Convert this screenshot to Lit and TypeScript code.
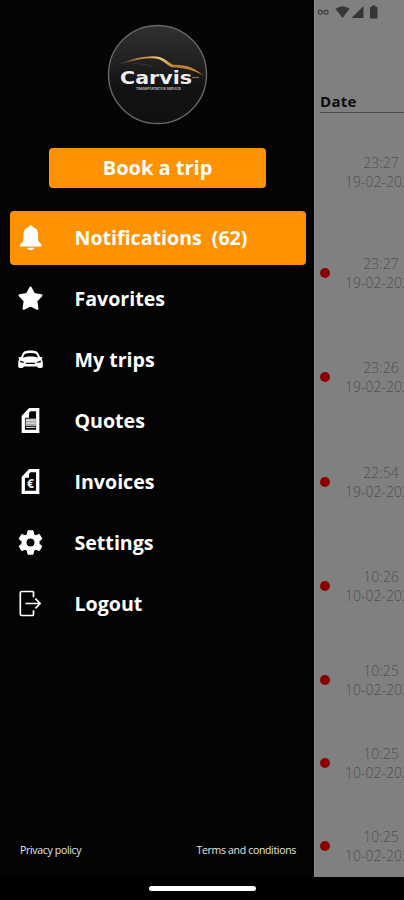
import { LitElement, html, svg, css } from "lit";
import { customElement } from "lit/decorators.js";
import { styleMap } from "lit/directives/style-map.js";

const icons: Record<string, unknown> = {
  bell: svg`<path fill="#fff" d="M12.8 0c1.2 0 1.9.8 1.9 1.9 3.600.9 5.400 3.500 5.400 7.400v5.200c0 1.700 1 3 3.200 4.600v2.400H2.100v-2.400c2.200-1.600 3.400-2.900 3.400-4.600V9.300c0-3.900 1.800-6.500 5.400-7.400C10.900.8 11.600 0 12.800 0zM8.800 22.700h8c-.7 1.500-2.200 2.300-4 2.300s-3.300-.8-4-2.300z"/>`,
  star: svg`<path fill="#fff" stroke="#fff" stroke-width="2.400" stroke-linejoin="round" d="M12.500 1.700l3.500 6.500 7.300 1.200-5.200 5.400 1.200 7.800-6.800-3.400-6.800 3.400 1.200-7.800L1.700 9.400 9 8.200z"/>`,
  car: svg`<path fill="#fff" d="M12.500 3.500C7.500 3.500 5.200 4.600 4.300 7L3 9.900l-2 .3-.8.900 1.200.9C.5 13.200.2 14.500.2 16.300v3c0 1.300.5 1.700 1.700 1.700h2.200c1 0 1.500-.5 1.700-1.400h13.400c.2.900.7 1.400 1.700 1.400h2.200c1.200 0 1.700-.4 1.700-1.700v-3c0-1.800-.3-3.100-1.200-4.300l1.200-.9-.8-.9-2-.3L20.700 7C19.800 4.600 17.500 3.500 12.500 3.500z"/><path d="M5 10.700l1-2.600c.5-1.300 2.500-2 6.500-2s6 .7 6.500 2l1 2.600c-2-.9-4.300-1.200-7.500-1.200s-5.500.3-7.500 1.200zM2 13.600l4.200 1.300v.9L2.400 15.400zM23 13.600l-4.200 1.300v.9l3.800-.4zM7.500 15.800h10l-.8 1.300H8.300z"/>`,
  quote: svg`<path fill="none" stroke="#fff" stroke-width="3.300" d="M19.700 1.700v21.700H5.300V8.600l6.500-6.900z"/><path fill="#fff" d="M11 1v8.700H4V8l6.500-7z"/><path fill="#a6a6a6" d="M7.500 10.500h10.700v7.600H7.500z"/><path stroke="#fff" stroke-width=".9" d="M8 12.200h9.500M8 15.100h9.500M8 19.400h9.500"/>`,
  invoice: svg`<path fill="none" stroke="#fff" stroke-width="3.300" d="M19.700 1.700v21.700H5.300V8.600l6.500-6.900z"/><path fill="#fff" d="M11 1v7.700H4V8l6.500-7z"/><text class="euro" x="9" y="19.200">€</text>`,
  gear: svg`<path fill="#fff" stroke="#fff" stroke-width="1" stroke-linejoin="round" fill-rule="evenodd" d="M10 .8h5l.7 3.700 2.100 1.200 3.500-1.300 2.600 4.400-2.900 2.400v2.600l2.900 2.400-2.600 4.400-3.500-1.300-2.100 1.200-.7 3.700h-5l-.7-3.700-2.100-1.200-3.500 1.300-2.600-4.400L4 13.800v-2.600L1.100 8.800l2.600-4.400 3.500 1.300 2.100-1.200zM12.500 8a4.500 4.500 0 1 0 0 9 4.500 4.500 0 0 0 0-9z"/>`,
  logout: svg`<g fill="none" stroke="#fff" stroke-width="1.700" stroke-linejoin="round"><path d="M15.500 6.300V1.500a1 1 0 0 0-1-1H3.800a1.500 1.500 0 0 0-1.500 1.500v21a1.500 1.500 0 0 0 1.500 1.500h10.700a1 1 0 0 0 1-1v-4.200M7.500 12.500h14.700M17.400 7.700l4.800 4.800-4.800 4.800"/></g>`,
};

const items = [
  ["bell", "Notifications", "(62)"],
  ["star", "Favorites", ""],
  ["car", "My trips", ""],
  ["quote", "Quotes", ""],
  ["invoice", "Invoices", ""],
  ["gear", "Settings", ""],
  ["logout", "Logout", ""],
];

const trips = [
  { time: "23:27", date: "19-02-2024", unread: false, height: 98 },
  { time: "23:27", date: "19-02-2024", unread: true, height: 104.5 },
  { time: "23:26", date: "19-02-2024", unread: true, height: 104.5 },
  { time: "22:54", date: "19-02-2024", unread: true, height: 104.5 },
  { time: "10:26", date: "10-02-2024", unread: true, height: 104 },
  { time: "10:25", date: "10-02-2024", unread: true, height: 83 },
  { time: "10:25", date: "10-02-2024", unread: true, height: 83 },
  { time: "10:25", date: "10-02-2024", unread: true, height: 83 },
];

@customElement("app-drawer")
export class AppDrawer extends LitElement {
  static styles = css`
    :host { display: flex; flex-direction: column; box-sizing: border-box; width: 314px; height: 877px; flex: none; background: #040404; color: #fff; padding: 24px 8px 0 10px; }
    .logo { width: 101px; height: 101px; margin-left: 97px; display: block; flex: none; }
    .brand { font: bold 17px "DejaVu Sans", sans-serif; fill: #eee; }
    .tag { font: bold 4px "Liberation Sans", sans-serif; fill: #bbb; }
    .book { flex: none; margin: 23px 0 0 39px; width: 217px; height: 39.500px; border: 0; border-radius: 4px; background: #ff9200; color: #fff; font: bold 20px "Open Sans", sans-serif; padding: 0; }
    nav { display: flex; flex-direction: column; gap: 7px; margin-top: 23px; }
    .item { display: flex; align-items: center; height: 54px; padding-left: 8px; border-radius: 4px; font: bold 19.600px "Open Sans", sans-serif; white-space: pre; }
    .item.active { background: #ff9200; }
    .item svg { width: 25px; height: 25px; margin-right: 31.500px; flex: none; overflow: visible; }
    .count { margin-left: 10px; }
    .euro { font: bold 12px "Open Sans", sans-serif; fill: #eee; }
    footer { display: flex; justify-content: space-between; margin-top: auto; padding: 0 10px 18px 10px; font: 10.500px/17px "Open Sans", sans-serif; letter-spacing: -0.320px; color: #e4e4e4; }
  `;
  render() {
    return html`
      <svg class="logo" viewBox="0 0 101 101">
        <defs>
          <linearGradient id="disc" x1="0" y1="0" x2="0" y2="1"><stop offset="0" stop-color="#303030"/><stop offset=".45" stop-color="#1d1d1d"/><stop offset=".6" stop-color="#131313"/><stop offset="1" stop-color="#101010"/></linearGradient>
          <linearGradient id="gold" x1="0" x2="1"><stop offset="0" stop-color="#60431e"/><stop offset=".35" stop-color="#d9a04b"/><stop offset=".5" stop-color="#f0c47c"/><stop offset=".65" stop-color="#b87c30"/><stop offset="1" stop-color="#d89028"/></linearGradient>
        </defs>
        <circle cx="50.500" cy="50.500" r="49" fill="url(#disc)" stroke="#666" stroke-width="1.400"/>
        <path fill="url(#gold)" d="M11 40.500C22 36.500 31 32.500 43 32.400c13-1 15 4 23 8.400 13-.5 22 3 31.500 11.700-9-6-20-9-33-9.200-9-5-9-9.300-21.500-9-12 .6-19 3.200-32 6.200z"/>
        <path d="M25 39q11 1 20 3" fill="none" stroke="#3a3328"/>
        <text class="brand" x="13" y="59.500" textLength="72" lengthAdjust="spacingAndGlyphs">Carvis</text>
        <path d="M85 53.500h7" stroke="#777"/>
        <text class="tag" x="29" y="66" textLength="45" lengthAdjust="spacingAndGlyphs">TRANSPORTATION SERVICE</text>
      </svg>
      <button class="book">Book a trip</button>
      <nav>
        ${items.map(([icon, label, count], i) => html`
          <div class="item ${i === 0 ? "active" : ""}">
            <svg viewBox="0 0 25 25">${icons[icon]}</svg><span>${label}</span>${count ? html`<span class="count">${count}</span>` : ""}
          </div>`)}
      </nav>
      <footer><span>Privacy policy</span><span>Terms and conditions</span></footer>
    `;
  }
}

@customElement("app-root")
export class AppRoot extends LitElement {
  static styles = css`
    :host { display: flex; flex-direction: column; width: 404px; height: 900px; overflow: hidden; background: #000; font-family: "Open Sans", sans-serif; }
    .screen { display: flex; height: 877px; overflow: hidden; }
    .page { flex: 1; min-width: 0; overflow: hidden; background: #808080; border-left: 1px solid #8c8c8c; display: flex; flex-direction: column; }
    .status { width: 64px; height: 16px; flex: none; margin: 4px 0 0 1px; }
    .head { flex: none; margin: 72px 0 10px 5px; height: 20px; font: bold 15px/19px "Open Sans", sans-serif; letter-spacing: 0.300px; color: #0c0c0c; border-bottom: 1.500px solid #4a4a4a; }
    .trip { flex: none; box-sizing: border-box; display: flex; align-items: center; padding-left: 5px; border-bottom: 1px solid #7b7b7b; width: 140px; }
    .dot { width: 10px; height: 10px; border-radius: 50%; flex: none; margin-right: 15px; }
    .dot.unread { background: #8b0000; }
    .when { width: 72px; text-align: center; font-size: 14px; line-height: 19px; color: #505050; white-space: nowrap; font-weight: 300; }
    .gesture { height: 23px; display: flex; justify-content: center; align-items: center; }
    .bar { width: 107px; height: 5px; border-radius: 3px; background: #fff; }
  `;
  render() {
    return html`
      <div class="screen">
        <app-drawer></app-drawer>
        <div class="page">
          <svg class="status" viewBox="0 0 64 16">
            <path d="M6.500 8.500L5.300 10a2 2 0 1 1 0-3.400L9 10a2 2 0 1 0 0-3.400L7.500 8.200" fill="none" stroke="#414141" stroke-width="1.300"/>
            <path d="M19.500 4.800Q26.500-.3 33.500 4.800L26.500 14z" fill="#363636"/>
            <path d="M47.500 2v12h-12z" fill="#363636"/>
            <path d="M56 1.500h3.500v1.500h2v11.500H54V3h2z" fill="#363636"/>
          </svg>
          <div class="head">Date</div>
          ${trips.map((t) => html`
            <div class="trip" style=${styleMap({ height: `${t.height}px` })}>
              <span class="dot ${t.unread ? "unread" : ""}"></span>
              <div class="when"><div>${t.time}</div><div>${t.date}</div></div>
            </div>`)}
        </div>
      </div>
      <div class="gesture"><div class="bar"></div></div>
    `;
  }
}
